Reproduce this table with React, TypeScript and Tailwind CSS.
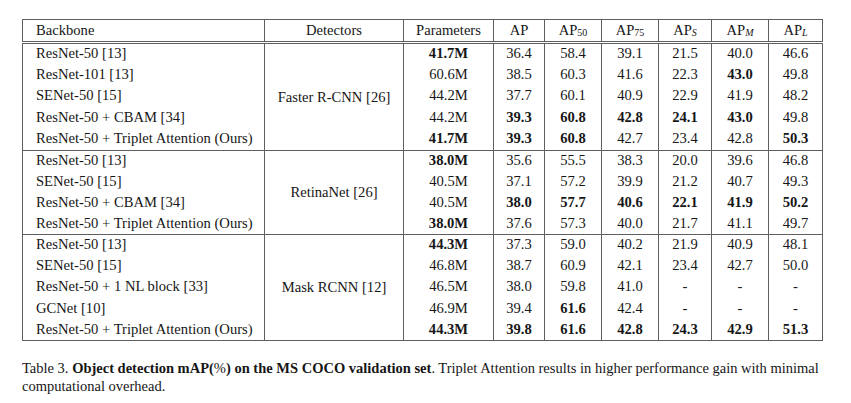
const ROWS: { group: string; heights: string[]; items: string[][] }[] = [
  {
    group: 'Faster R-CNN [26]',
    heights: ['h-[22px]', 'h-[21px]', 'h-[22px]', 'h-[21px]', 'h-[22px]'],
    items: [
      ['ResNet-50 [13]', '*41.7M', '36.4', '58.4', '39.1', '21.5', '40.0', '46.6'],
      ['ResNet-101 [13]', '60.6M', '38.5', '60.3', '41.6', '22.3', '*43.0', '49.8'],
      ['SENet-50 [15]', '44.2M', '37.7', '60.1', '40.9', '22.9', '41.9', '48.2'],
      ['ResNet-50 + CBAM [34]', '44.2M', '*39.3', '*60.8', '*42.8', '*24.1', '*43.0', '49.8'],
      ['ResNet-50 + Triplet Attention (Ours)', '*41.7M', '*39.3', '*60.8', '42.7', '23.4', '42.8', '*50.3'],
    ],
  },
  {
    group: 'RetinaNet [26]',
    heights: ['h-[21px]', 'h-[21px]', 'h-[21px]', 'h-[21px]'],
    items: [
      ['ResNet-50 [13]', '*38.0M', '35.6', '55.5', '38.3', '20.0', '39.6', '46.8'],
      ['SENet-50 [15]', '40.5M', '37.1', '57.2', '39.9', '21.2', '40.7', '49.3'],
      ['ResNet-50 + CBAM [34]', '40.5M', '*38.0', '*57.7', '*40.6', '*22.1', '*41.9', '*50.2'],
      ['ResNet-50 + Triplet Attention (Ours)', '*38.0M', '37.6', '57.3', '40.0', '21.7', '41.1', '49.7'],
    ],
  },
  {
    group: 'Mask RCNN [12]',
    heights: ['h-[21px]', 'h-[21px]', 'h-[22px]', 'h-[21px]', 'h-[21px]'],
    items: [
      ['ResNet-50 [13]', '*44.3M', '37.3', '59.0', '40.2', '21.9', '40.9', '48.1'],
      ['SENet-50 [15]', '46.8M', '38.7', '60.9', '42.1', '23.4', '42.7', '50.0'],
      ['ResNet-50 + 1 NL block [33]', '46.5M', '38.0', '59.8', '41.0', '-', '-', '-'],
      ['GCNet [10]', '46.9M', '39.4', '*61.6', '42.4', '-', '-', '-'],
      ['ResNet-50 + Triplet Attention (Ours)', '*44.3M', '*39.8', '*61.6', '*42.8', '*24.3', '*42.9', '*51.3'],
    ],
  },
]

function Cell({ v }: { v: string }) {
  const bold = v.startsWith('*')
  return (
    <td className="border-x border-[#5f5f5f] p-0 pt-[2px] text-center align-top">
      <span className={bold ? 'font-bold' : ''}>{bold ? v.slice(1) : v}</span>
    </td>
  )
}

// subscript sits low, close to the baseline
function Sub({ t, italic }: { t: string; italic?: boolean }) {
  return <span className={`relative top-[1px] text-[10px] ${italic ? 'italic' : ''}`}>{t}</span>
}

const TH = 'border-x border-[#5f5f5f] p-0 pt-[3px] align-top font-normal'

export default function App() {
  return (
    <div
      className="h-[403px] w-[851px] bg-white pl-[22px] pt-[19px] text-[#161616]"
      style={{ fontFamily: '"Liberation Serif", "Times New Roman", serif' }}
    >
      <table className="table-fixed border-collapse border border-[#5f5f5f] text-[14.6px] leading-none">
        <colgroup>
          <col className="w-[242px]" />
          <col className="w-[139px]" />
          <col className="w-[90px]" />
          <col className="w-[51px]" />
          <col className="w-[57px]" />
          <col className="w-[57px]" />
          <col className="w-[53px]" />
          <col className="w-[57px]" />
          <col className="w-[54px]" />
        </colgroup>
        <thead>
          <tr className="h-[23px] border-b-[3px] border-double border-[#5f5f5f]">
            <th className={`${TH} pl-[13px] text-left`}>Backbone</th>
            <th className={TH}>Detectors</th>
            <th className={TH}>Parameters</th>
            <th className={TH}>AP</th>
            <th className={TH}>
              AP<Sub t="50" />
            </th>
            <th className={TH}>
              AP<Sub t="75" />
            </th>
            <th className={TH}>
              AP<Sub t="S" italic />
            </th>
            <th className={TH}>
              AP<Sub t="M" italic />
            </th>
            <th className={TH}>
              AP<Sub t="L" italic />
            </th>
          </tr>
        </thead>
        {ROWS.map((g) => (
          <tbody key={g.group} className="border-t border-[#5f5f5f]">
            {g.items.map((r, i) => (
              <tr key={i} className={g.heights[i]}>
                <td className="border-x border-[#5f5f5f] p-0 pt-[2px] pl-[13px] align-top whitespace-nowrap">
                  {r[0]}
                </td>
                {i === 0 && (
                  <td rowSpan={g.items.length} className="border-x border-[#5f5f5f] p-0 text-center">
                    {g.group}
                  </td>
                )}
                {r.slice(1).map((v, j) => (
                  <Cell key={j} v={v} />
                ))}
              </tr>
            ))}
          </tbody>
        ))}
      </table>
      <p className="mt-[18px] whitespace-nowrap text-[14.5px] leading-[18px]">
        Table 3. <b>Object detection mAP(</b>%<b>) on the MS COCO validation set</b>. Triplet Attention results in
        higher performance gain with minimal
        <br />
        computational overhead.
      </p>
    </div>
  )
}
